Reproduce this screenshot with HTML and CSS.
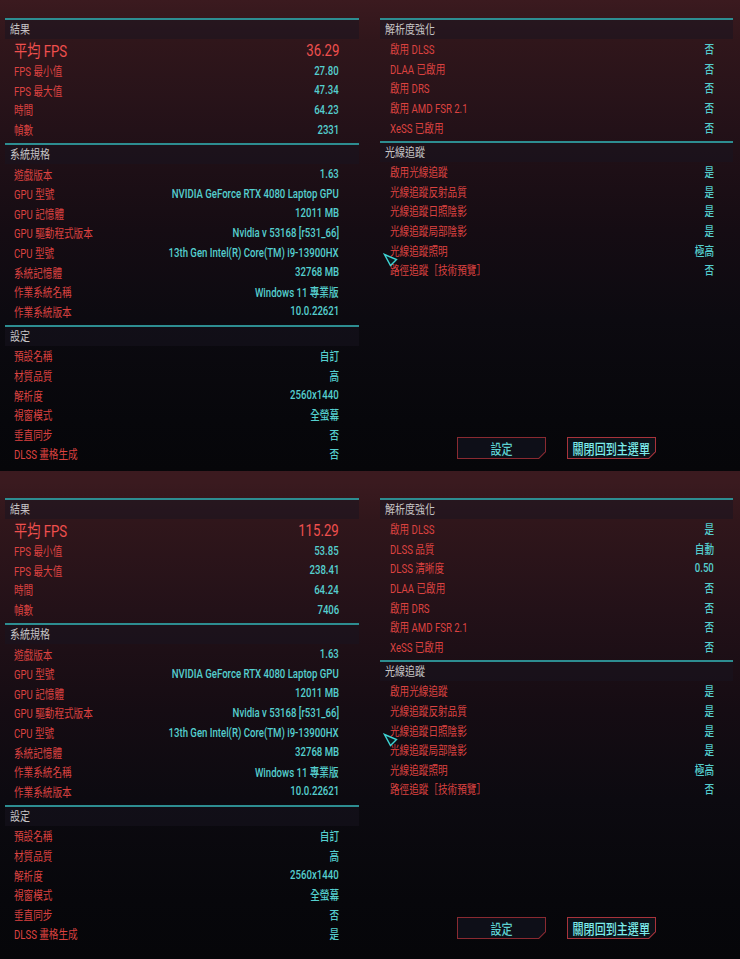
FILE: index.html
```html
<!DOCTYPE html>
<html lang="zh-Hant">
<head>
<meta charset="utf-8">
<title>基準測試結果</title>
<link rel="stylesheet" href="styles.css">
</head>
<body>
<div class="screen">
  <section class="panel panel--first">
    <div class="col">
      <div class="group">
        <div class="group-head"><span class="t">結果</span></div>
        <div class="row row--big"><span class="lbl">平均 FPS</span><span class="val">36.29</span></div>
        <div class="row"><span class="lbl">FPS 最小值</span><span class="val">27.80</span></div>
        <div class="row"><span class="lbl">FPS 最大值</span><span class="val">47.34</span></div>
        <div class="row"><span class="lbl">時間</span><span class="val">64.23</span></div>
        <div class="row"><span class="lbl">幀數</span><span class="val">2331</span></div>
      </div>
      <div class="group">
        <div class="group-head"><span class="t">系統規格</span></div>
        <div class="row"><span class="lbl">遊戲版本</span><span class="val">1.63</span></div>
        <div class="row"><span class="lbl">GPU 型號</span><span class="val">NVIDIA GeForce RTX 4080 Laptop GPU</span></div>
        <div class="row"><span class="lbl">GPU 記憶體</span><span class="val">12011 MB</span></div>
        <div class="row"><span class="lbl">GPU 驅動程式版本</span><span class="val">Nvidia v 53168 [r531_66]</span></div>
        <div class="row"><span class="lbl">CPU 型號</span><span class="val">13th Gen Intel(R) Core(TM) i9-13900HX</span></div>
        <div class="row"><span class="lbl">系統記憶體</span><span class="val">32768 MB</span></div>
        <div class="row"><span class="lbl">作業系統名稱</span><span class="val">Windows 11 專業版</span></div>
        <div class="row"><span class="lbl">作業系統版本</span><span class="val">10.0.22621</span></div>
      </div>
      <div class="group">
        <div class="group-head"><span class="t">設定</span></div>
        <div class="row"><span class="lbl">預設名稱</span><span class="val">自訂</span></div>
        <div class="row"><span class="lbl">材質品質</span><span class="val">高</span></div>
        <div class="row"><span class="lbl">解析度</span><span class="val">2560x1440</span></div>
        <div class="row"><span class="lbl">視窗模式</span><span class="val">全螢幕</span></div>
        <div class="row"><span class="lbl">垂直同步</span><span class="val">否</span></div>
        <div class="row"><span class="lbl">DLSS 畫格生成</span><span class="val">否</span></div>
      </div>
    </div>
    <div class="col col--right">
      <div class="group">
        <div class="group-head"><span class="t">解析度強化</span></div>
        <div class="row"><span class="lbl">啟用 DLSS</span><span class="val">否</span></div>
        <div class="row"><span class="lbl">DLAA 已啟用</span><span class="val">否</span></div>
        <div class="row"><span class="lbl">啟用 DRS</span><span class="val">否</span></div>
        <div class="row"><span class="lbl">啟用 AMD FSR 2.1</span><span class="val">否</span></div>
        <div class="row"><span class="lbl">XeSS 已啟用</span><span class="val">否</span></div>
      </div>
      <div class="group">
        <div class="group-head"><span class="t">光線追蹤</span></div>
        <div class="row"><span class="lbl">啟用光線追蹤</span><span class="val">是</span></div>
        <div class="row"><span class="lbl">光線追蹤反射品質</span><span class="val">是</span></div>
        <div class="row"><span class="lbl">光線追蹤日照陰影</span><span class="val">是</span></div>
        <div class="row"><span class="lbl">光線追蹤局部陰影</span><span class="val">是</span></div>
        <div class="row"><span class="lbl">光線追蹤照明</span><span class="val">極高</span></div>
        <div class="row"><span class="lbl">路徑追蹤［技術預覽］</span><span class="val">否</span></div>
      </div>
      <div class="actions">
        <div class="btn"><span class="btn-t">設定</span></div>
        <div class="btn btn--hot"><span class="btn-t">關閉回到主選單</span></div>
      </div>
    </div>
    <svg class="cursor" width="16" height="16" viewBox="0 0 16 16"><polygon points="1.5,1.5 13.5,6.5 7.5,12.5" fill="#0a1a1e" stroke="#3fd3d3" stroke-width="1.4" stroke-linejoin="miter"/></svg>
  </section>

  <section class="panel panel--second">
    <div class="col">
      <div class="group">
        <div class="group-head"><span class="t">結果</span></div>
        <div class="row row--big"><span class="lbl">平均 FPS</span><span class="val">115.29</span></div>
        <div class="row"><span class="lbl">FPS 最小值</span><span class="val">53.85</span></div>
        <div class="row"><span class="lbl">FPS 最大值</span><span class="val">238.41</span></div>
        <div class="row"><span class="lbl">時間</span><span class="val">64.24</span></div>
        <div class="row"><span class="lbl">幀數</span><span class="val">7406</span></div>
      </div>
      <div class="group">
        <div class="group-head"><span class="t">系統規格</span></div>
        <div class="row"><span class="lbl">遊戲版本</span><span class="val">1.63</span></div>
        <div class="row"><span class="lbl">GPU 型號</span><span class="val">NVIDIA GeForce RTX 4080 Laptop GPU</span></div>
        <div class="row"><span class="lbl">GPU 記憶體</span><span class="val">12011 MB</span></div>
        <div class="row"><span class="lbl">GPU 驅動程式版本</span><span class="val">Nvidia v 53168 [r531_66]</span></div>
        <div class="row"><span class="lbl">CPU 型號</span><span class="val">13th Gen Intel(R) Core(TM) i9-13900HX</span></div>
        <div class="row"><span class="lbl">系統記憶體</span><span class="val">32768 MB</span></div>
        <div class="row"><span class="lbl">作業系統名稱</span><span class="val">Windows 11 專業版</span></div>
        <div class="row"><span class="lbl">作業系統版本</span><span class="val">10.0.22621</span></div>
      </div>
      <div class="group">
        <div class="group-head"><span class="t">設定</span></div>
        <div class="row"><span class="lbl">預設名稱</span><span class="val">自訂</span></div>
        <div class="row"><span class="lbl">材質品質</span><span class="val">高</span></div>
        <div class="row"><span class="lbl">解析度</span><span class="val">2560x1440</span></div>
        <div class="row"><span class="lbl">視窗模式</span><span class="val">全螢幕</span></div>
        <div class="row"><span class="lbl">垂直同步</span><span class="val">否</span></div>
        <div class="row"><span class="lbl">DLSS 畫格生成</span><span class="val">是</span></div>
      </div>
    </div>
    <div class="col col--right">
      <div class="group">
        <div class="group-head"><span class="t">解析度強化</span></div>
        <div class="row"><span class="lbl">啟用 DLSS</span><span class="val">是</span></div>
        <div class="row"><span class="lbl">DLSS 品質</span><span class="val">自動</span></div>
        <div class="row"><span class="lbl">DLSS 清晰度</span><span class="val">0.50</span></div>
        <div class="row"><span class="lbl">DLAA 已啟用</span><span class="val">否</span></div>
        <div class="row"><span class="lbl">啟用 DRS</span><span class="val">否</span></div>
        <div class="row"><span class="lbl">啟用 AMD FSR 2.1</span><span class="val">否</span></div>
        <div class="row"><span class="lbl">XeSS 已啟用</span><span class="val">否</span></div>
      </div>
      <div class="group">
        <div class="group-head"><span class="t">光線追蹤</span></div>
        <div class="row"><span class="lbl">啟用光線追蹤</span><span class="val">是</span></div>
        <div class="row"><span class="lbl">光線追蹤反射品質</span><span class="val">是</span></div>
        <div class="row"><span class="lbl">光線追蹤日照陰影</span><span class="val">是</span></div>
        <div class="row"><span class="lbl">光線追蹤局部陰影</span><span class="val">是</span></div>
        <div class="row"><span class="lbl">光線追蹤照明</span><span class="val">極高</span></div>
        <div class="row"><span class="lbl">路徑追蹤［技術預覽］</span><span class="val">否</span></div>
      </div>
      <div class="actions">
        <div class="btn"><span class="btn-t">設定</span></div>
        <div class="btn btn--hot"><span class="btn-t">關閉回到主選單</span></div>
      </div>
    </div>
    <svg class="cursor" width="16" height="16" viewBox="0 0 16 16"><polygon points="1.5,1.5 13.5,6.5 7.5,12.5" fill="#0a1a1e" stroke="#3fd3d3" stroke-width="1.4" stroke-linejoin="miter"/></svg>
  </section>
</div>
</body>
</html>
```

FILE: styles.css
```css
* { box-sizing: border-box; }
html, body {
  margin: 0;
  padding: 0;
  background: #060609;
}
body {
  font-family: Roboto, "Noto Sans CJK TC", "Noto Sans CJK SC", sans-serif;
  width: 740px;
  overflow: hidden;
}
.screen {
  display: flex;
  flex-direction: column;
}
.panel {
  position: relative;
  display: grid;
  grid-template-columns: 354px 353px;
  grid-template-rows: minmax(0, 1fr);
  column-gap: 21px;
  padding: 18px 7px 12px 5px;
  height: 471px;
  background: linear-gradient(180deg, #3b1a1f 0px, #30161b 40px, #231118 130px, #150c13 230px, #0c0a10 320px, #07070b 420px, #060609 471px);
}
.panel--second {
  height: 488px;
  padding-top: 27px;
  padding-bottom: 20px;
  background: linear-gradient(180deg, #3b1a1f 0px, #3a1a1f 12px, #30161b 49px, #231118 139px, #150c13 239px, #0c0a10 329px, #07070b 429px, #060609 488px);
}
.col {
  display: flex;
  flex-direction: column;
  min-width: 0;
  min-height: 0;
}
.group {
  border-top: 2px solid #2d8d91;
  margin-bottom: 4px;
  flex: none;
}
.group-head {
  height: 19px;
  line-height: 19px;
  padding-left: 5px;
  background: rgba(24, 20, 32, 0.5);
  color: #c6c4c6;
  font-size: 12.5px;
}
.t, .lbl, .val, .btn-t {
  display: inline-block;
  transform: scaleX(0.8);
  white-space: nowrap;
}
.t, .lbl { transform-origin: left center; }
.val { transform-origin: right center; }
.row {
  display: flex;
  justify-content: space-between;
  align-items: center;
  height: 19.6px;
  padding: 0 20px 0 9px;
  font-size: 12px;
}
.col--right .row {
  padding: 0 19px 0 10px;
}
.lbl { color: #dc4240; }
.val { color: #55cfcf; font-weight: 500; }
.row--big {
  height: 22px;
  font-size: 16.5px;
}
.row--big .lbl, .row--big .val {
  color: #f0504e;
  font-weight: 400;
}
.actions {
  margin-top: auto;
  display: flex;
  justify-content: center;
  gap: 21px;
  flex: none;
}
.btn {
  position: relative;
  width: 89px;
  height: 22px;
  display: flex;
  align-items: center;
  justify-content: center;
  background: #8a2a31;
  clip-path: polygon(0 0, 100% 0, 100% calc(100% - 7px), calc(100% - 7px) 100%, 0 100%);
}
.btn::before {
  content: "";
  position: absolute;
  inset: 1px;
  background: #0e0f18;
  clip-path: polygon(0 0, 100% 0, 100% calc(100% - 6.5px), calc(100% - 6.5px) 100%, 0 100%);
}
.btn-t {
  position: relative;
  color: #5fd3d3;
  font-size: 13.5px;
  font-weight: 500;
  transform-origin: center center;
  transform: scaleX(0.82);
}
.btn--hot { background: #a8333b; }
.btn--hot::before { background: #0c1219; }
.btn--hot .btn-t { color: #7cecec; }
.cursor {
  position: absolute;
  left: 383px;
  top: 253px;
}
.panel--second .cursor { top: 262px; }
```
